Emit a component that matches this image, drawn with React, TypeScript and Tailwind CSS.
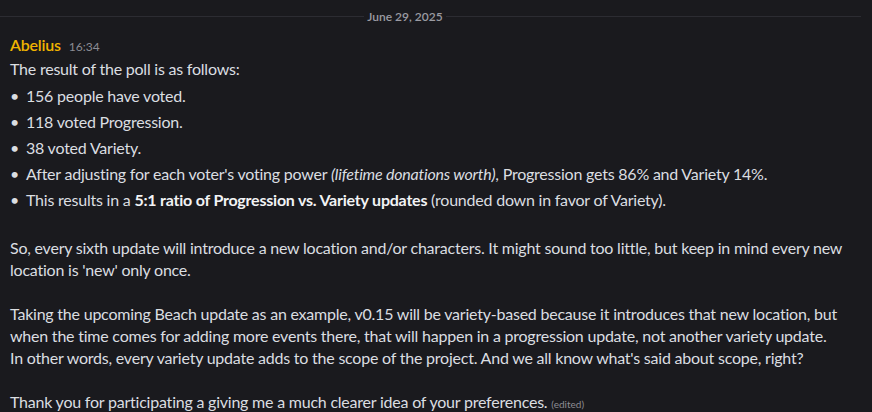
import React from 'react';

// Discord-style chat message, dark theme
const bullets: React.ReactNode[] = [
	'156 people have voted.',
	'118 voted Progression.',
	'38 voted Variety.',
	<>
		After adjusting for each voter's voting power <em>(lifetime donations worth)</em>, Progression gets 86% and Variety 14%.
	</>,
	<>
		This results in a <strong className="font-bold text-[#f2f3f5]">5:1 ratio of Progression vs. Variety updates</strong> (rounded down in favor of Variety).
	</>,
];

export default function App() {
	return (
		<div
			className="w-[872px] h-[412px] overflow-hidden bg-[#1a1a1e] text-[#dbdee1]"
			style={{ fontFamily: 'Lato, "Liberation Sans", sans-serif' }}
		>
			{/* Date divider */}
			<div className="flex items-center h-[33px] pr-[11px]">
				<div className="w-[364px] h-px bg-[#2c2c32]" />
				<span className="w-[82px] text-center text-[12px] font-semibold leading-4 text-[#9b9ba2]">June 29, 2025</span>
				<div className="flex-1 h-px bg-[#2c2c32]" />
			</div>

			{/* Message */}
			<div className="pl-[10px] pt-[1px] text-[16px] leading-[22px] tracking-[-0.22px]">
				<div className="flex items-baseline gap-[8px]">
					<span className="font-semibold text-[#f0b400]">Abelius</span>
					<span className="text-[12px] tracking-normal text-[#8c8c93]">16:34</span>
				</div>

				<div className="whitespace-nowrap">
					<div>The result of the poll is as follows:</div>
					<ul className="mt-[5px]">
						{bullets.map((b, i) => (
							<li key={i} className="flex mb-1">
								<span className="w-[16px] text-[#dbdee1]">•</span>
								<span>{b}</span>
							</li>
						))}
					</ul>
					<div className="h-[22px]" />
					<div>
						So, every sixth update will introduce a new location and/or characters. It might sound too little, but keep in mind every new
						<br />
						location is 'new' only once.
					</div>
					<div className="h-[22px]" />
					<div>
						Taking the upcoming Beach update as an example, v0.15 will be variety-based because it introduces that new location, but
						<br />
						when the time comes for adding more events there, that will happen in a progression update, not another variety update.
						<br />
						In other words, every variety update adds to the scope of the project. And we all know what's said about scope, right?
					</div>
					<div className="h-[22px]" />
					<div>
						Thank you for participating a giving me a much clearer idea of your preferences.{' '}
						<span className="text-[10px] tracking-normal text-[#8c8c93]">(edited)</span>
					</div>
				</div>
			</div>
		</div>
	);
}
